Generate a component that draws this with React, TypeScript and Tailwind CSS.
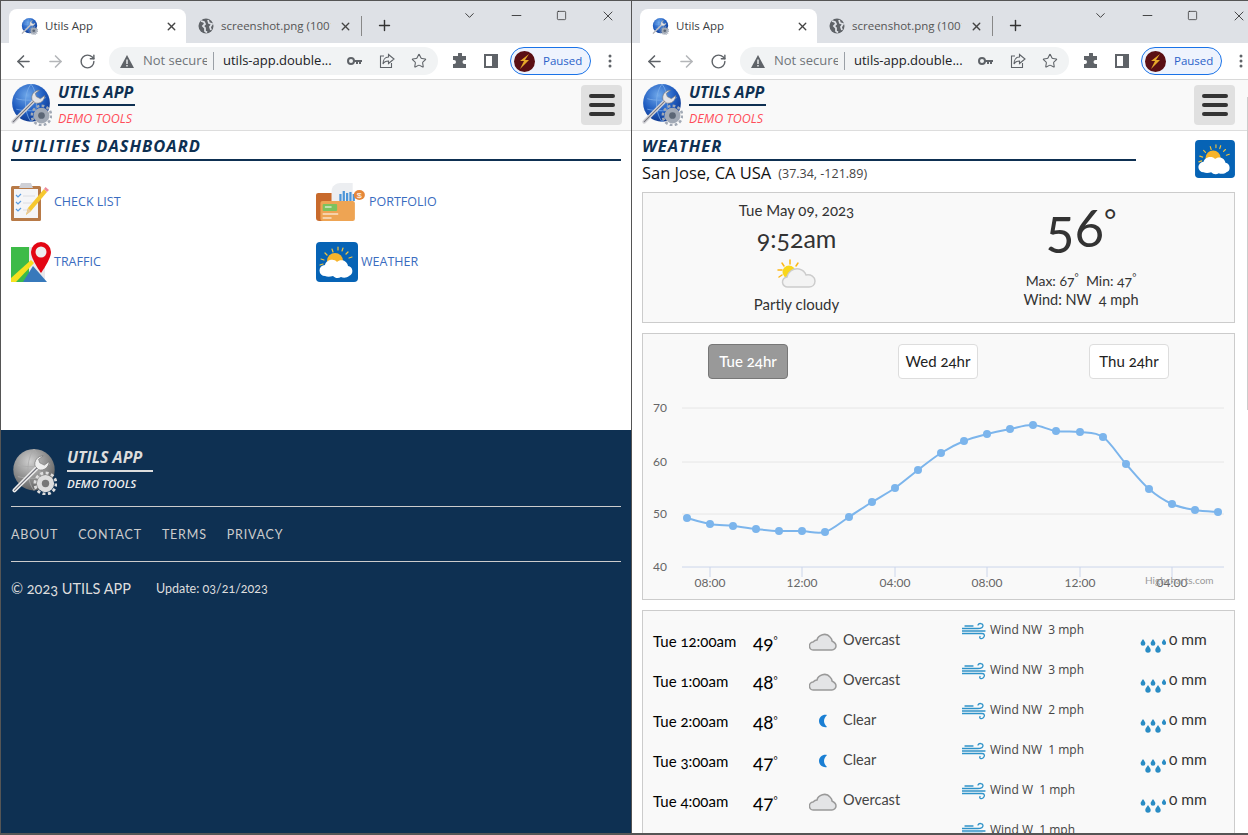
import React from 'react';
import { useId } from 'react';
import { X, Plus, ChevronDown, Minus, Square, ArrowLeft, ArrowRight, RotateCw, Star } from 'lucide-react';

const headFont = "font-['Open_Sans',sans-serif]";
const bodyFont = "font-['Lato',sans-serif]";

function Logo({ size, gray = false }: { size: number; gray?: boolean }) {
  const id = useId();
  return (
    <svg width={size} height={size} viewBox="0 0 40 40" className="shrink-0">
      <defs>
        <radialGradient id={id} cx="0.4" cy="0.3" r="0.8">
          <stop offset="0" stopColor={gray ? '#d0d0d0' : '#6fa8ea'} />
          <stop offset="0.55" stopColor={gray ? '#8b8b8b' : '#1f5cc0'} />
          <stop offset="1" stopColor={gray ? '#555' : '#0c2f80'} />
        </radialGradient>
      </defs>
      <circle cx="20" cy="18" r="18" fill={`url(#${id})`} />
      <path d="M6 14c6 2 22 2 28-1M6 24c8 2 22 2 27 0M20 0c-7 9-7 27 0 36M20 0c7 9 7 27 0 36" fill="none" stroke={gray ? '#aaa' : '#7fb0ea'} strokeWidth="0.7" />
      <path d="M3 36 24 15" stroke={gray ? '#eee' : '#d4d4d8'} strokeWidth="3.6" strokeLinecap="round" />
      <path d="M3 36 24 15" stroke="#71717a" strokeWidth="1" strokeLinecap="round" />
      <path d="M28 6a7 7 0 0 0-7 9l3 3a7 7 0 0 0 9-7l-4 3-4-2-1-3z" fill={gray ? '#eee' : '#e4e4e7'} stroke="#777" strokeWidth="0.6" />
      <circle cx="30" cy="30" r="7.5" fill={gray ? '#ddd' : '#a1a9b5'} />
      <circle cx="30" cy="30" r="9.2" fill="none" stroke={gray ? '#ddd' : '#a1a9b5'} strokeWidth="2.4" strokeDasharray="2.6 2.2" />
      <circle cx="30" cy="30" r="3.2" fill={gray ? '#777' : '#5b6675'} />
    </svg>
  );
}

function WeatherTile({ w, h }: { w: number; h: number }) {
  return (
    <svg width={w} height={h} viewBox="0 0 42 40" className="shrink-0">
      <rect width="42" height="40" rx="4" fill="#0663b5" />
      <g stroke="#f3c33c" strokeWidth="1.2" strokeLinecap="round">
        <path d="M16 7l1 3M22 5v3M27 6l-1 3M9 11l2 2M5 17l3 1M4 23l3-1M32 10l-2 2M36 15l-3 1" />
      </g>
      <circle cx="19" cy="19" r="8" fill="#f7b42c" />
      <path d="M9 34a5.500 5.500 0 0 1 0-11c1-5 9-7 12-3 3-3 10-2 11 4a5.200 5.200 0 0 1 1 10c-2 2-6 2-8 1-3 2-6 1-8-1-3 1-6 1-8 0z" fill="#fff" />
    </svg>
  );
}

function Clipboard() {
  return (
    <svg width="40" height="38" viewBox="0 0 40 38" className="shrink-0">
      <rect x="0" y="3" width="30" height="35" rx="1.5" fill="#b87a47" />
      <rect x="3" y="6" width="24" height="29" fill="#f5f5f7" />
      <path d="M10 0h10l2 5H8z" fill="#cfd0d6" />
      <g fill="none" stroke="#5b9be0" strokeWidth="1.2">
        <path d="M5 12l2 2 3-3M5 19l2 2 3-3M5 26l2 2 3-3" />
      </g>
      <path d="M12 13h12M12 20h12M12 27h8" stroke="#dcdde2" strokeWidth="1" />
      <path d="M15 32l2-7L33 6l3 3-16 19z" fill="#f6c82f" />
      <path d="M33 6l1.500-2 3.500 3-2 2z" fill="#ee8b9b" />
      <path d="M15 32l2-7 3 3z" fill="#e7c79c" />
    </svg>
  );
}

function Folder() {
  return (
    <svg width="50" height="38" viewBox="0 0 45 38" preserveAspectRatio="none" className="shrink-0">
      <path d="M14 8c0-5 4-8 8-8h11v30H14z" fill="#eceef1" />
      <g fill="#4b95d8">
        <rect x="21" y="11" width="2" height="7" />
        <rect x="24" y="8" width="2" height="10" />
        <rect x="27" y="10" width="2" height="8" />
        <rect x="30" y="9" width="2" height="9" />
        <rect x="33" y="11" width="2" height="7" />
      </g>
      <circle cx="39" cy="12" r="5" fill="#e5873a" />
      <text x="39" y="15" textAnchor="middle" fontSize="8" fill="#fff" fontFamily="Liberation Sans">$</text>
      <path d="M0 12a2 2 0 0 1 2-2h12v28H3a3 3 0 0 1-3-3z" fill="#c86a2c" />
      <rect x="4" y="18" width="31" height="20" rx="2" fill="#eea453" />
      <rect x="6" y="21" width="13" height="7" rx="1" fill="#7cc25e" />
      <path d="M8 24h6M6 31h14M6 35h8" stroke="#fff" strokeWidth="1" />
    </svg>
  );
}

function MapPin() {
  return (
    <svg width="40" height="40" viewBox="0 0 40 40" className="shrink-0">
      <path d="M0 5h20l8 35H0z" fill="#3dbb48" />
      <path d="M18 5h16v35H18z" fill="#e9e9ec" />
      <path d="M12 40 22 24l14 16z" fill="#3779bb" />
      <path d="M0 40V36L20 18l3 3L5 40z" fill="#f7e11f" />
      <path d="M30 0a10 10 0 0 0-10 10c0 7 10 21 10 21s10-14 10-21A10 10 0 0 0 30 0z" fill="#e30613" />
      <circle cx="30" cy="10" r="5.500" fill="#eee" />
    </svg>
  );
}

function PartlyCloudy() {
  return (
    <svg width="40" height="30" viewBox="0 0 40 30" className="shrink-0">
      <g stroke="#fdb714" strokeWidth="1.500" strokeLinecap="round">
        <path d="M13 1v4M5 4l2 3M21 4l-2 3M1 11h4M2 18l3-2" />
      </g>
      <circle cx="12" cy="13" r="6.500" fill="#f9d71c" />
      <path d="M11 28a5 5 0 0 1-1-10c1-5 6-9 12-8 4 1 6 3 7 6 5-1 9 2 9 6 0 4-3 6-6 6z" fill="#f3f3f3" stroke="#ccc" strokeWidth="1.500" />
    </svg>
  );
}

function Cloud() {
  return (
    <svg width="28" height="20" viewBox="0 0 28 20">
      <path d="M5 19a4 4 0 0 1-1-8c1-1 2-2 4-2 1-5 9-8 13-3 1 1 2 3 2 4 2 1 4 3 4 5s-2 4-4 4z" fill="#e3e4e6" stroke="#999" strokeWidth="1.500" />
    </svg>
  );
}

function Moon() {
  return (
    <svg width="12" height="14" viewBox="0 0 12 14">
      <path d="M10 1C6 0 2 3 2 7s4 7 8 6C8 11 7 9 7 7s1-4 3-6z" fill="#1a7fd4" />
    </svg>
  );
}

function Wind() {
  return (
    <svg width="25" height="20" viewBox="0 0 25 20" fill="none" stroke="#2f93c9" strokeWidth="1.300" strokeLinecap="round">
      <path d="M0 7.500h16c3 0 5-1 5-3s-4-3-5-.5M0 10h23M0 12.500h20c3 0 3 3 1 4.500s-4 0-3-1.500M3 5h8" />
    </svg>
  );
}

function Drops() {
  const drop = (x: number, y: number, k: number) => (
    <path key={x} d={`M${x} ${y}c${2 * k} ${3 * k} ${3 * k} ${4 * k} ${3 * k} ${5.5 * k}a${3 * k} ${3 * k} 0 0 1-${6 * k} 0c0-${1.5 * k} ${k} -${2.5 * k} ${3 * k}-${5.5 * k}z`} fill="#2a8cc4" />
  );
  return (
    <svg width="26" height="16" viewBox="0 0 26 16" className="mt-[9px]">
      {drop(3, 1, 0.8)}
      {drop(8, 7, 0.9)}
      {drop(13, 1, 0.8)}
      {drop(18, 7, 0.9)}
      {drop(24, 1, 0.7)}
    </svg>
  );
}

function Globe() {
  return (
    <svg width="16" height="16" viewBox="0 0 16 16" className="shrink-0">
      <circle cx="8" cy="8" r="7.500" fill="#5f6368" />
      <path d="M3 3l3 1 1 2-2 2 2 2v3l2 1.500M10 2l1 3 3 1-2 3 1 3" stroke="#dee1e6" strokeWidth="1.800" fill="none" />
    </svg>
  );
}

function BrowserBar({ title }: { title: string }) {
  return (
    <div className="w-[632px] shrink-0 font-['Open_Sans',sans-serif]">
      <div className="flex h-[42px] items-end bg-[#dee1e6] pl-2">
        <div className="flex h-[34px] w-[177px] items-center rounded-t-lg bg-white pl-[12px]">
          <Logo size={17} />
          <span className="ml-[7px] text-[11.500px] text-[#3c4043]">{title}</span>
          <X size={13} strokeWidth={2.5} className="ml-auto mr-2 text-[#444]" />
        </div>
        <div className="flex h-[34px] w-[177px] items-center pl-3">
          <Globe />
          <span className="ml-[7px] w-[110px] overflow-hidden whitespace-nowrap text-[11.500px] text-[#555]">screenshot.png (1001</span>
          <X size={13} strokeWidth={2.5} className="ml-2 text-[#444]" />
          <div className="ml-[9px] h-[20px] w-px bg-[#888]" />
        </div>
        <Plus size={17} strokeWidth={2} className="mb-[9px] ml-[13px] text-[#333]" />
        <ChevronDown size={15} strokeWidth={1.5} className="mb-[20px] ml-[69px] text-[#333]" />
        <Minus size={15} strokeWidth={1.3} className="mb-[20px] ml-[32px] text-[#222]" />
        <Square size={11} strokeWidth={1.5} className="mb-[22px] ml-[32px] text-[#222]" />
        <X size={16} strokeWidth={1.2} className="mb-[19px] ml-[33px] text-[#222]" />
      </div>
      <div className="flex h-[36px] items-center bg-white pl-[13px]">
        <ArrowLeft size={19} strokeWidth={2} className="text-[#5f6368]" />
        <ArrowRight size={19} strokeWidth={2} className="ml-[13px] text-[#b4b6b9]" />
        <RotateCw size={17} strokeWidth={2} className="ml-[14px] text-[#5f6368]" />
        <div className="ml-[13px] flex h-[28px] w-[329px] items-center rounded-full bg-[#f1f3f4] pl-[11px]">
          <svg width="14" height="13" viewBox="0 0 14 13"><path d="M7 0l7 13H0z" fill="#5f6368" /><path d="M6.300 4.500h1.400v4.500H6.300zM6.300 10h1.400v1.500H6.300z" fill="#f1f3f4" /></svg>
          <span className="ml-[9px] w-[64px] overflow-hidden whitespace-nowrap text-[13px] text-[#70757a]">Not secure</span>
          <div className="ml-[6px] h-[18px] w-px bg-[#9aa0a6]" />
          <span className="ml-[9px] w-[118px] whitespace-nowrap text-[13px] text-[#202124]">utils-app.double...</span>
          <svg width="15" height="8" viewBox="0 0 15 8" className="ml-[6px]"><circle cx="4" cy="4" r="3" fill="none" stroke="#5f6368" strokeWidth="2" /><path d="M7 3h8v2h-1v2h-2V5h-1v2H9V5H7z" fill="#5f6368" /></svg>
          <svg width="16" height="16" viewBox="0 0 16 16" fill="none" stroke="#5f6368" strokeWidth="1.100" className="ml-[17px]"><path d="M5 3H1.500v11.500h11V10" /><path d="M9.500 1.500 15 6l-5.500 4.500V8C7 8 5 9 4 11c0-4 2-7 5.500-7z" /></svg>
          <Star size={16} strokeWidth={1.6} className="ml-[16px] text-[#5f6368]" />
        </div>
        <svg width="16" height="16" viewBox="0 0 16 16" className="ml-[14px]"><path d="M6 1a2 2 0 0 1 4 0v2h4v4h-1.500a2 2 0 0 0 0 4H14v4H1v-4h1a2 2 0 0 0 0-4H1V3h5z" fill="#5f6368" /></svg>
        <svg width="14" height="14" viewBox="0 0 14 14" className="ml-[16px]"><rect x="1" y="1" width="12" height="12" fill="none" stroke="#5f6368" strokeWidth="2" /><rect x="8" y="1" width="5" height="12" fill="#5f6368" /></svg>
        <div className="ml-[12px] flex h-[28px] w-[81px] items-center rounded-full border border-[#1a73e8] bg-[#eef3fd] pl-[3px]">
          <svg width="21" height="21" viewBox="0 0 21 21"><circle cx="10.500" cy="10.500" r="10.500" fill="#5a0f14" /><path d="M15 3 6 10h4l-4 8 9-9h-4z" fill="#e6a92a" /></svg>
          <span className="ml-[8px] text-[11.500px] text-[#2a62c9]">Paused</span>
        </div>
        <svg width="4" height="14" viewBox="0 0 4 14" className="ml-[17px]"><circle cx="2" cy="2" r="1.500" fill="#5f6368" /><circle cx="2" cy="7" r="1.500" fill="#5f6368" /><circle cx="2" cy="12" r="1.500" fill="#5f6368" /></svg>
      </div>
      <div className="h-px bg-[#d9d9d9]" />
    </div>
  );
}

function PageHeader({ pad }: { pad: string }) {
  return (
    <div className={`flex h-[51px] shrink-0 items-center justify-between border-b border-[#ddd] bg-[#f9f9f9] pl-[9px] ${pad}`}>
      <div className="flex items-center">
        <Logo size={42} />
        <div className="ml-[6px] w-[77px]">
          <div className={`${headFont} border-b-2 border-[#0e3052] pb-[3px] text-[16px] font-bold italic leading-[18px] whitespace-nowrap text-[#0e3052]`}>UTILS APP</div>
          <div className={`${headFont} mt-[5px] text-[12.500px] italic leading-[16px] whitespace-nowrap text-[#ff4d5a]`}>DEMO TOOLS</div>
        </div>
      </div>
      <div className="flex h-[40px] w-[41px] flex-col items-center justify-center gap-[5px] rounded bg-[#e0e0e0]">
        <div className="h-[4px] w-[26px] rounded-full bg-[#333]" />
        <div className="h-[4px] w-[26px] rounded-full bg-[#333]" />
        <div className="h-[4px] w-[26px] rounded-full bg-[#333]" />
      </div>
    </div>
  );
}

function Tile({ icon, label }: { icon: React.ReactNode; label: string }) {
  return (
    <div className="flex h-[40px] items-center gap-[3px]">
      {icon}
      <span className={`${headFont} text-[12.500px] text-[#3a6cc0]`}>{label}</span>
    </div>
  );
}

function Dashboard() {
  return (
    <div className="relative flex h-full w-[632px] flex-col overflow-hidden border-x border-[#555] bg-white">
      <BrowserBar title="Utils App" />
      <PageHeader pad="pr-[9px]" />
      <div className="h-[299px] shrink-0 px-[10px]">
        <h1 className={`${headFont} mt-[4px] border-b-2 border-[#0e3052] pb-[2px] text-[16.500px] font-bold italic leading-[22px] tracking-[1px] text-[#0e3052]`}>UTILITIES DASHBOARD</h1>
        <div className="mt-[21px] grid grid-cols-[305px_1fr] gap-y-[20px]">
          <Tile icon={<Clipboard />} label="CHECK LIST" />
          <Tile icon={<Folder />} label="PORTFOLIO" />
          <Tile icon={<MapPin />} label="TRAFFIC" />
          <Tile icon={<WeatherTile w={42} h={40} />} label="WEATHER" />
        </div>
      </div>
      <div className={`${bodyFont} flex-1 bg-[#0e3052] px-[10px] pt-[19px] text-[#ccc]`}>
        <div className="flex items-start">
          <Logo size={46} gray />
          <div className="-mt-px ml-[10px] w-[86px]">
            <div className={`${headFont} border-b-2 border-[#ddd] pb-[3px] text-[16px] font-bold italic leading-[19px] whitespace-nowrap text-[#ddd]`}>UTILS APP</div>
            <div className={`${headFont} mt-[4px] text-[11.500px] font-semibold italic leading-[16px] whitespace-nowrap text-[#eee]`}>DEMO TOOLS</div>
          </div>
        </div>
        <div className="mt-[11px] border-t border-[#ccc]" />
        <div className="flex h-[54px] items-center gap-[20px] pt-[2px] text-[12.500px] tracking-[0.8px]">
          <span>ABOUT</span>
          <span>CONTACT</span>
          <span>TERMS</span>
          <span>PRIVACY</span>
        </div>
        <div className="border-t border-[#ccc]" />
        <div className="mt-[16px] flex items-center oldstyle-nums">
          <span className="w-[145px] text-[14.500px] text-[#ddd]">© 2023 UTILS APP</span>
          <span className="text-[12.500px] text-[#ddd]">Update: 03/21/2023</span>
        </div>
      </div>
    </div>
  );
}

const chartPts: [number, number][] = [
  [45, 185], [68, 191], [91, 193], [114, 196], [137, 198], [160, 198], [183, 199], [207, 184],
  [230, 169], [253, 155], [276, 137], [299, 120], [322, 108], [345, 101], [368, 96], [391, 92],
  [414, 98], [438, 99], [461, 104], [484, 131], [507, 156], [530, 171], [553, 177], [576, 179],
];

// catmull-rom so the line bends like the highcharts spline
function splinePath(pts: [number, number][]) {
  let d = `M${pts[0][0]} ${pts[0][1]}`;
  for (let i = 0; i < pts.length - 1; i++) {
    const p0 = pts[Math.max(i - 1, 0)];
    const p1 = pts[i];
    const p2 = pts[i + 1];
    const p3 = pts[Math.min(i + 2, pts.length - 1)];
    const c1x = p1[0] + (p2[0] - p0[0]) / 6;
    const c1y = p1[1] + (p2[1] - p0[1]) / 6;
    const c2x = p2[0] - (p3[0] - p1[0]) / 6;
    const c2y = p2[1] - (p3[1] - p1[1]) / 6;
    d += ` C${c1x} ${c1y} ${c2x} ${c2y} ${p2[0]} ${p2[1]}`;
  }
  return d;
}

function TempChart() {
  const grid = [[75, '70'], [129, '60'], [181, '50'], [234, '40']] as const;
  const ticks = [[68, '08:00'], [160, '12:00'], [253, '04:00'], [345, '08:00'], [438, '12:00'], [530, '04:00']] as const;
  return (
    <svg width="591" height="266" viewBox="0 0 591 266" className="absolute -left-px -top-px lining-nums">
      {grid.map(([y, label]) => (
        <g key={label}>
          <line x1="40" x2="582" y1={y} y2={y} stroke={label === '40' ? '#ccd6eb' : '#e6e6e6'} />
          <text x="11" y={y + 4} fontSize="12" fill="#666" fontFamily="Lato, sans-serif">{label}</text>
        </g>
      ))}
      {ticks.map(([x, label], i) => (
        <g key={i}>
          <line x1={x} x2={x} y1="234" y2="244" stroke="#ccd6eb" />
          <text x={x} y="254" fontSize="12" fill="#666" textAnchor="middle" fontFamily="Lato, sans-serif">{label}</text>
        </g>
      ))}
      <path d={splinePath(chartPts)} fill="none" stroke="#7cb5ec" strokeWidth="2" />
      {chartPts.map(([x, y]) => <circle key={x} cx={x} cy={y} r="4" fill="#7cb5ec" />)}
      <text x="503" y="251" fontSize="10" fill="#999" fontFamily="Lato, sans-serif">Highcharts.com</text>
    </svg>
  );
}

const hours = [
  { time: 'Tue 12:00am', temp: '49', sky: 'Overcast', wind: 'Wind NW  3 mph' },
  { time: 'Tue 1:00am', temp: '48', sky: 'Overcast', wind: 'Wind NW  3 mph' },
  { time: 'Tue 2:00am', temp: '48', sky: 'Clear', wind: 'Wind NW  2 mph' },
  { time: 'Tue 3:00am', temp: '47', sky: 'Clear', wind: 'Wind NW  1 mph' },
  { time: 'Tue 4:00am', temp: '47', sky: 'Overcast', wind: 'Wind W  1 mph' },
  { time: '', temp: '', sky: '', wind: 'Wind W  1 mph' },
];

function HourRow({ time, temp, sky, wind }: { time: string; temp: string; sky: string; wind: string }) {
  return (
    <div className="grid h-[40px] grid-cols-[100px_56px_34px_119px_178px_1fr] items-center">
      <span className="text-[15px] whitespace-nowrap text-black">{time}</span>
      <span className="mt-[3px] text-[19px] text-black">
        {temp}
        {temp && <sup className="text-[10px]">°</sup>}
      </span>
      <span className="flex w-[28px] justify-center">{sky === 'Clear' ? <Moon /> : sky ? <Cloud /> : null}</span>
      <span className="mb-[2px] text-[14.500px] text-[#444]">{sky}</span>
      <span className={`${headFont} flex items-start self-start text-[12px] whitespace-pre text-[#444] lining-nums`}>
        <Wind />
        <span className="ml-[3px]">{wind}</span>
      </span>
      {time && (
        <span className="flex items-start text-[15.500px] text-[#333]">
          <Drops />
          <span className="ml-[3px] -mt-px">0 mm</span>
        </span>
      )}
    </div>
  );
}

function Weather() {
  return (
    <div className="relative flex h-full flex-1 flex-col overflow-hidden bg-white">
      <BrowserBar title="Utils App" />
      <PageHeader pad="pr-[13px]" />
      <div className={`${bodyFont} flex-1 overflow-hidden pl-[10px] pr-[13px] oldstyle-nums`}>
        <div className="flex h-[61px] items-start justify-between">
          <div className="mt-[4px] w-[494px]">
            <h1 className={`${headFont} border-b-2 border-[#0e3052] pb-[2px] text-[16.500px] font-bold italic leading-[22px] tracking-[1px] text-[#0e3052]`}>WEATHER</h1>
            <div className="flex h-[24px] items-center lining-nums">
              <span className={`${headFont} whitespace-nowrap text-[16.500px] text-[#111]`}>San Jose, CA USA</span>
              <span className={`${headFont} ml-[7px] mt-[2px] whitespace-nowrap text-[12.500px] text-[#444]`}>(37.34, -121.89)</span>
            </div>
          </div>
          <div className="mt-[9px]"><WeatherTile w={40} h={38} /></div>
        </div>
        <div className="flex h-[131px] border border-[#ccc] bg-[#f9f9f9]">
          <div className="flex w-[307px] flex-col items-center text-[#333]">
            <span className="mt-[7px] text-[15px] leading-[20px]">Tue May 09, 2023</span>
            <span className="text-[25px] leading-[36px]">9:52am</span>
            <span className="mt-[3px]"><PartlyCloudy /></span>
            <span className="mt-[5px] text-[15px] leading-[20px]">Partly cloudy</span>
          </div>
          <div className="flex flex-1 flex-col items-center pr-[22px] text-[#333]">
            <span className="mt-[3px] h-[64px] text-[54px] leading-[62px]">56<sup className="text-[30px]">°</sup></span>
            <span className="mt-[11px] text-[14px] leading-[19px] whitespace-pre">Max: 67<sup className="text-[10px]">°</sup>  Min: 47<sup className="text-[10px]">°</sup></span>
            <span className="text-[14.500px] leading-[19px] whitespace-pre">Wind: NW  4 mph</span>
          </div>
        </div>
        <div className="relative mt-[10px] h-[267px] border border-[#ccc] bg-[#f9f9f9]">
          <TempChart />
          <div className="relative flex gap-[110px] pl-[65px] pt-[10px]">
            <button className="h-[35px] w-[80px] rounded border border-[#777] bg-[#999] text-[15px] font-medium text-white">Tue 24hr</button>
            <button className="h-[35px] w-[80px] rounded border border-[#ddd] bg-white text-[15px] text-[#222]">Wed 24hr</button>
            <button className="ml-[1px] h-[35px] w-[80px] rounded border border-[#ddd] bg-white text-[15px] text-[#222]">Thu 24hr</button>
          </div>
        </div>
        <div className="mt-[10px] h-[300px] border border-[#ccc] bg-[#f9f9f9] pl-[10px] pt-[10px]">
          {hours.map((h, i) => <HourRow key={i} {...h} />)}
        </div>
      </div>
      {/* page scrollbar thumb at the window's cut edge */}
      <div className="absolute right-0 top-[96px] h-[313px] w-px bg-[#ccc]" />
    </div>
  );
}

export default function App() {
  return (
    <div className="relative flex h-[835px] w-[1248px] overflow-hidden border-t border-[#555]">
      <Dashboard />
      <Weather />
      <div className="absolute inset-x-0 bottom-0 h-[2px] bg-[#555]" />
    </div>
  );
}
